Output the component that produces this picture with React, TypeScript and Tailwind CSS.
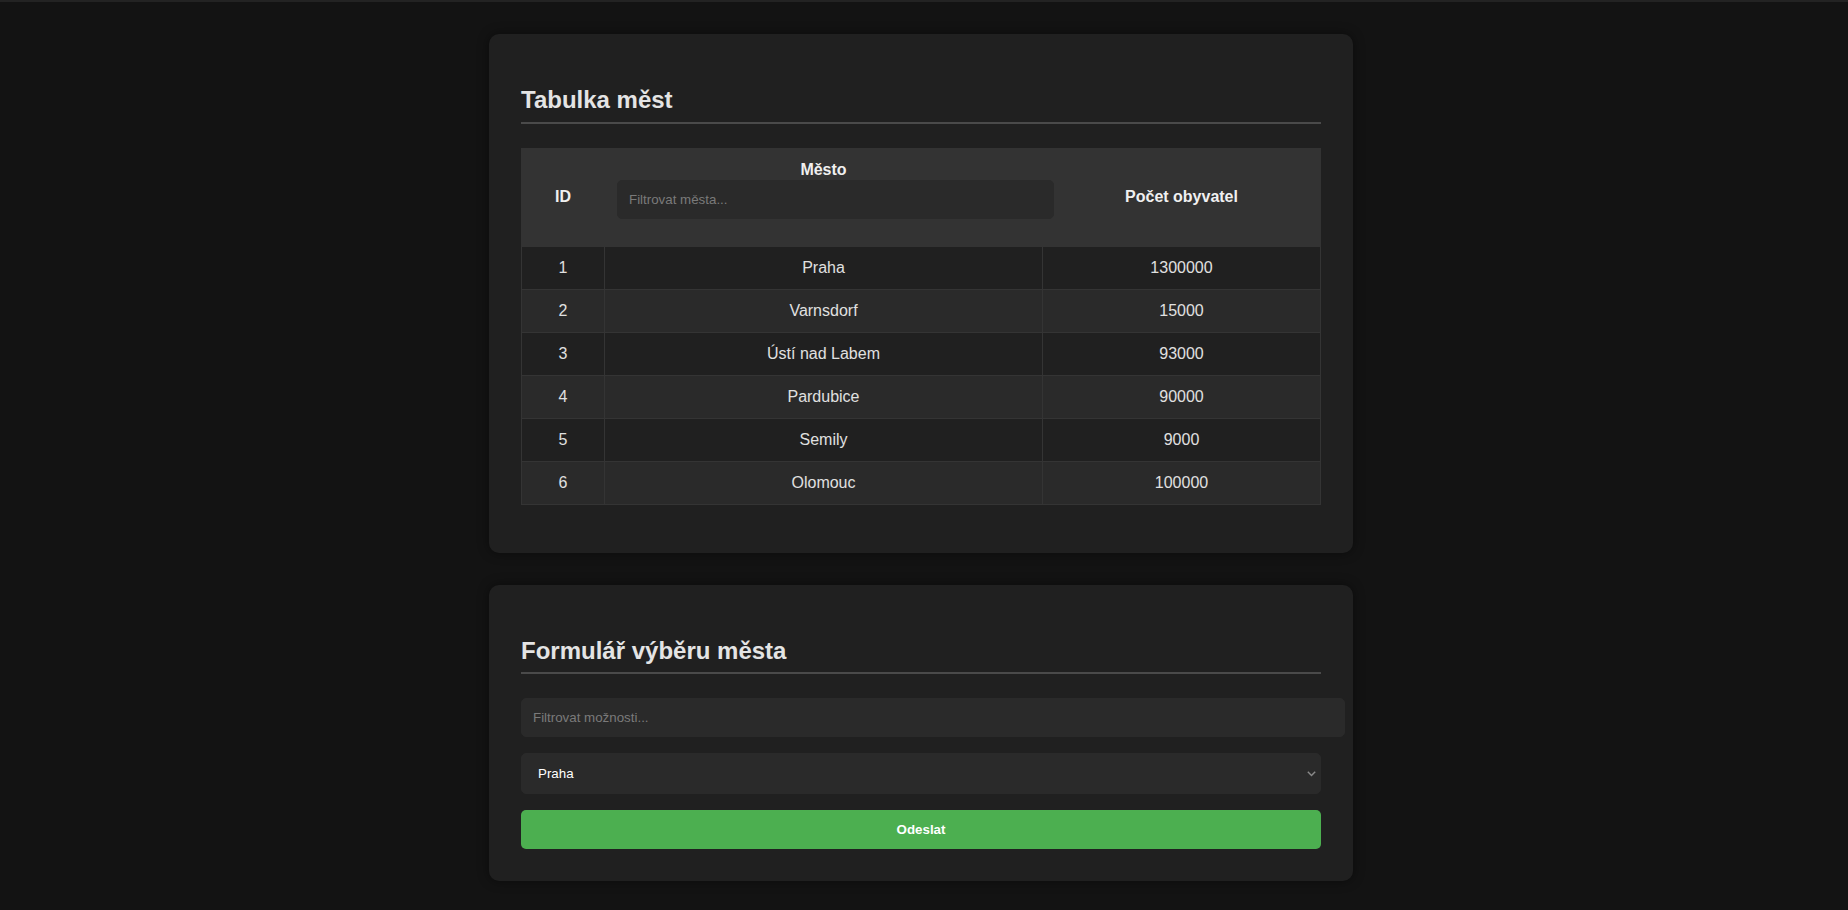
import React, { useState } from 'react';

interface City {
  id: number;
  name: string;
  population: number;
}

const cities: City[] = [
  { id: 1, name: 'Praha', population: 1300000 },
  { id: 2, name: 'Varnsdorf', population: 15000 },
  { id: 3, name: 'Ústí nad Labem', population: 93000 },
  { id: 4, name: 'Pardubice', population: 90000 },
  { id: 5, name: 'Semily', population: 9000 },
  { id: 6, name: 'Olomouc', population: 100000 },
];

const Card: React.FC<{ title: string; children: React.ReactNode; className?: string }> = ({ title, children, className }) => (
  <section className={`w-[864px] rounded-[10px] bg-[#202020] px-8 pt-8 pb-8 shadow-[0_0_12px_rgba(0,0,0,0.45)] ${className ?? ''}`}>
    <h2 className="mt-[20px] mb-6 border-b-2 border-[#4a4a4a] pb-2 text-[24px] leading-[27.6px] font-bold text-[#e4e4e4]">{title}</h2>
    {children}
  </section>
);

const App: React.FC = () => {
  const [tableFilter, setTableFilter] = useState('');
  const [optionFilter, setOptionFilter] = useState('');
  const [selected, setSelected] = useState('Praha');

  const rows = cities.filter((c) => c.name.toLowerCase().includes(tableFilter.toLowerCase()));
  const options = cities.filter((c) => c.name.toLowerCase().includes(optionFilter.toLowerCase()));

  return (
    <div className="min-h-screen bg-[#131313] font-['Liberation_Sans',Arial,sans-serif] text-[#e0e0e0]">
      <div className="h-[2px] bg-[#232323]" />
      <div className="flex flex-col items-center pt-8 pr-[6px] pb-8">
        {/* Tabulka */}
        <Card title="Tabulka měst">
          <table className="mb-4 w-full border-collapse">
            <thead>
              <tr className="bg-[#333333] text-[16px] font-bold text-[#f0f0f0]">
                <th className="w-[83px] border border-[#333333] px-3 py-3 text-center align-middle leading-[18px]">ID</th>
                <th className="w-[438px] border border-[#333333] px-3 py-3 text-center align-top">
                  <div className="leading-[18px]">Město</div>
                  <input
                    value={tableFilter}
                    onChange={(e) => setTableFilter(e.target.value)}
                    placeholder="Filtrovat města..."
                    className="relative z-10 mt-[1px] mb-[15px] box-content block h-[15px] w-full rounded-[5px] border border-[#2a2a2a] bg-[#2a2a2a] px-[11px] py-[11px] text-left text-[13.33px] leading-[15px] font-normal text-[#e0e0e0] outline-none placeholder:text-[#7a7a7a]"
                  />
                </th>
                <th className="border border-[#333333] px-3 py-3 text-center align-middle leading-[18px]">Počet obyvatel</th>
              </tr>
            </thead>
            <tbody>
              {rows.map((c, i) => (
                <tr key={c.id} className={i % 2 === 0 ? 'bg-[#202020]' : 'bg-[#2a2a2a]'}>
                  <td className="border border-[#343434] px-3 py-3 text-center text-[16px] leading-[18px]">{c.id}</td>
                  <td className="border border-[#343434] px-3 py-3 text-center text-[16px] leading-[18px]">{c.name}</td>
                  <td className="border border-[#343434] px-3 py-3 text-center text-[16px] leading-[18px]">{c.population}</td>
                </tr>
              ))}
            </tbody>
          </table>
        </Card>

        {/* Formulář */}
        <Card title="Formulář výběru města" className="mt-8">
          <input
            value={optionFilter}
            onChange={(e) => setOptionFilter(e.target.value)}
            placeholder="Filtrovat možnosti..."
            className="box-content block h-[15px] w-full rounded-[5px] border border-[#2a2a2a] bg-[#2a2a2a] px-[11px] py-[11px] text-[13.33px] leading-[15px] text-[#e0e0e0] outline-none placeholder:text-[#7a7a7a]"
          />
          <div className="relative mt-4">
            <select
              value={selected}
              onChange={(e) => setSelected(e.target.value)}
              className="block h-[41px] w-full appearance-none rounded-[5px] border border-[#2a2a2a] bg-[#2a2a2a] pl-4 pr-8 text-[13.33px] leading-[15px] text-white outline-none"
            >
              {options.map((c) => (
                <option key={c.id} value={c.name}>{c.name}</option>
              ))}
            </select>
            <svg className="pointer-events-none absolute right-[5px] top-1/2 -translate-y-1/2" width="9" height="6" viewBox="0 0 9 6" fill="none">
              <path d="M0.8 0.8 L4.5 4.6 L8.2 0.8" stroke="#8a8a8a" strokeWidth="1.4" />
            </svg>
          </div>
          <button
            type="button"
            className="mt-4 block h-[39px] w-full rounded-[5px] bg-[#4caf50] text-[13.33px] leading-[15px] font-bold text-white"
          >
            Odeslat
          </button>
        </Card>
      </div>
    </div>
  );
};

export default App;
